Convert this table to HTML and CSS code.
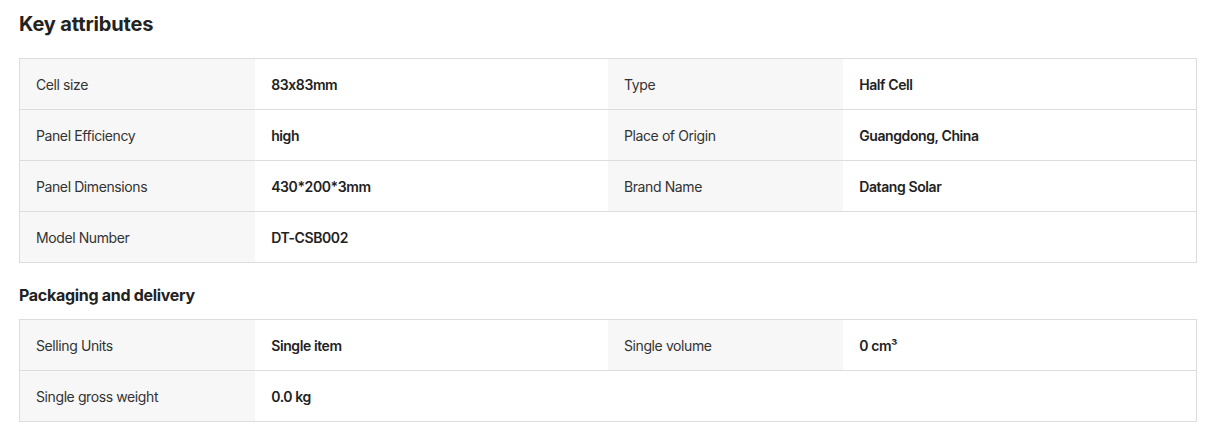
FILE: index.html
```html
<!DOCTYPE html>
<html>
<head>
<meta charset="utf-8">
<link rel="stylesheet" href="styles.css">
</head>
<body>
<div class="page">
  <h2 class="title">Key attributes</h2>
  <div class="table">
    <div class="row">
      <div class="label">Cell size</div><div class="value">83x83mm</div>
      <div class="label">Type</div><div class="value">Half Cell</div>
    </div>
    <div class="row">
      <div class="label">Panel Efficiency</div><div class="value">high</div>
      <div class="label">Place of Origin</div><div class="value">Guangdong, China</div>
    </div>
    <div class="row">
      <div class="label">Panel Dimensions</div><div class="value">430*200*3mm</div>
      <div class="label">Brand Name</div><div class="value">Datang Solar</div>
    </div>
    <div class="row">
      <div class="label">Model Number</div><div class="value">DT-CSB002</div>
      <div class="empty"></div><div class="empty"></div>
    </div>
  </div>
  <h3 class="subtitle">Packaging and delivery</h3>
  <div class="table">
    <div class="row">
      <div class="label">Selling Units</div><div class="value">Single item</div>
      <div class="label">Single volume</div><div class="value">0 cm³</div>
    </div>
    <div class="row">
      <div class="label">Single gross weight</div><div class="value">0.0 kg</div>
      <div class="empty"></div><div class="empty"></div>
    </div>
  </div>
</div>
</body>
</html>
```
FILE: styles.css
```css
html, body {
  margin: 0;
  padding: 0;
  background: #fff;
}
body {
  font-family: Inter, "Noto Sans", sans-serif;
  font-feature-settings: "calt" 0;
  color: #222;
}
.page {
  padding: 10px 9px 0 19px;
}
.title {
  margin: 0 0 20px;
  font-size: 20px;
  line-height: 28px;
  font-weight: 700;
  letter-spacing: -0.15px;
  color: #222;
}
.subtitle {
  margin: 20px 0 12px;
  font-size: 16px;
  line-height: 24px;
  font-weight: 700;
  letter-spacing: -0.3px;
  color: #222;
}
.table {
  border: 1px solid #ddd;
}
.row {
  display: grid;
  grid-template-columns: 20% 30% 20% 30%;
  height: 50px;
  border-bottom: 1px solid #ddd;
}
.row:last-child {
  border-bottom: none;
}
.label, .value {
  display: flex;
  align-items: center;
  padding: 0 16px;
  font-size: 14px;
  letter-spacing: -0.4px;
}
.label {
  background: #f7f7f7;
  color: #333;
  font-weight: 400;
}
.value {
  color: #222;
  font-weight: 600;
}
```
